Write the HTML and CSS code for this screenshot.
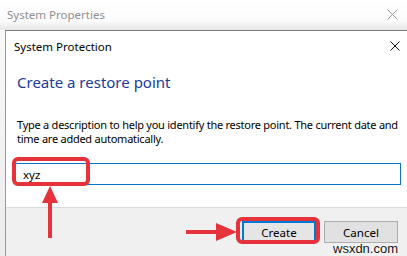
FILE: index.html
```html
<!DOCTYPE html>
<html lang="en">
<head>
    <meta charset="UTF-8">
    <title>System Protection</title>
    <link rel="stylesheet" href="styles.css">
</head>
<body>

    <!-- Parent window title bar -->
    <div class="outer-bar">
        <span class="outer-title">System Properties</span>
        <svg class="outer-close" width="11" height="11" viewBox="0 0 11 11">
            <path d="M0.5 0.5 L10.5 10.5 M10.5 0.5 L0.5 10.5" stroke="#9a9a9a" stroke-width="1" fill="none"/>
        </svg>
    </div>

    <!-- Child dialog -->
    <div class="dialog">
        <div class="dialog-bar">
            <span class="dialog-title">System Protection</span>
            <svg class="dialog-close" width="10" height="10" viewBox="0 0 10 10">
                <path d="M0.5 0.5 L9.5 9.5 M9.5 0.5 L0.5 9.5" stroke="#111" stroke-width="1" fill="none"/>
            </svg>
        </div>

        <div class="content">
            <h1>Create a restore point</h1>
            <p class="desc">Type a description to help you identify the restore point. The current date and<br>time are added automatically.</p>
            <input class="name-box" type="text" value="xyz">
        </div>

        <div class="footer">
            <button class="btn btn-default">Create</button>
            <button class="btn">Cancel</button>
        </div>
    </div>

    <!-- Red annotations drawn over the dialog -->
    <svg class="marks" width="407" height="256" viewBox="0 0 407 256">
        <rect x="14" y="159" width="74" height="25" rx="4" fill="none" stroke="#e5323b" stroke-width="4"/>
        <rect x="238" y="219" width="80" height="23" rx="4" fill="none" stroke="#e5323b" stroke-width="4"/>
        <path d="M48 238 L48 203 L42 203 L50 186 L58 203 L52 203 L52 238 Z" fill="#e5323b"/>
        <path d="M186 230 L216 230 L216 223 L237 232 L216 241 L216 234 L186 234 Z" fill="#e5323b"/>
    </svg>

    <div class="watermark">wsxdn.com</div>

</body>
</html>
```

FILE: styles.css
```css
* {
    margin: 0;
    padding: 0;
    box-sizing: border-box;
}

body {
    width: 407px;
    height: 256px;
    overflow: hidden;
    position: relative;
    font-family: 'Noto Sans', 'Open Sans', sans-serif;
    font-size: 11.5px;
    color: #000;
    background: linear-gradient(to bottom, #fafafa, #ececec);
}

.outer-bar {
    height: 30px;
    display: flex;
    align-items: center;
    justify-content: space-between;
    padding: 0 9px 1px 7px;
    background: linear-gradient(to bottom, #ffffff 0%, #fbfbfb 70%, #e6e6e6 100%);
}

.outer-title {
    color: #8f8f8f;
    font-size: 11.5px;
}

.dialog {
    margin-left: 5px;
    height: 226px;
    background-color: #fff;
    border-left: 1px solid #9a9a9a;
    border-top: 1px solid #7a7a7a;
    display: flex;
    flex-direction: column;
}

.dialog-bar {
    height: 30px;
    display: flex;
    align-items: center;
    justify-content: space-between;
    padding: 0 7px 0 8px;
}

.dialog-title {
    font-size: 11.5px;
}

.content {
    flex: 1;
    padding: 11px 6px 0 11px;
}

h1 {
    font-size: 15px;
    font-weight: normal;
    line-height: 20px;
    color: #1a3a9c;
}

.desc {
    margin-top: 26px;
    font-size: 11px;
    line-height: 14px;
    white-space: nowrap;
    letter-spacing: -0.25px;
}

.name-box {
    display: block;
    margin: 17px 0 0 -2px;
    width: 386px;
    height: 22px;
    border: 1px solid #0a73c8;
    padding: 0 7px;
    font-family: inherit;
    font-size: 11.5px;
    color: #000;
    outline: none;
}

.footer {
    height: 49px;
    background-color: #f0f0f0;
    border-top: 1px solid #dcdcdc;
    display: flex;
    justify-content: flex-end;
    align-items: flex-start;
    gap: 8px;
    padding: 13px 9px 0 0;
}

.btn {
    width: 74px;
    height: 22px;
    font-family: inherit;
    font-size: 11.5px;
    color: #000;
    background-color: #e1e1e1;
    border: 1px solid #adadad;
}

.btn-default {
    border: 2px solid #0078d7;
    background-color: #e5e5e5;
}

.marks {
    position: absolute;
    top: 0;
    left: 0;
}

.watermark {
    position: absolute;
    top: 241px;
    left: 333px;
    font-family: 'Liberation Sans', Arial, sans-serif;
    font-size: 13px;
    color: #111;
    text-shadow: 0 0 2px #fff, 0 0 2px #fff;
}
```
